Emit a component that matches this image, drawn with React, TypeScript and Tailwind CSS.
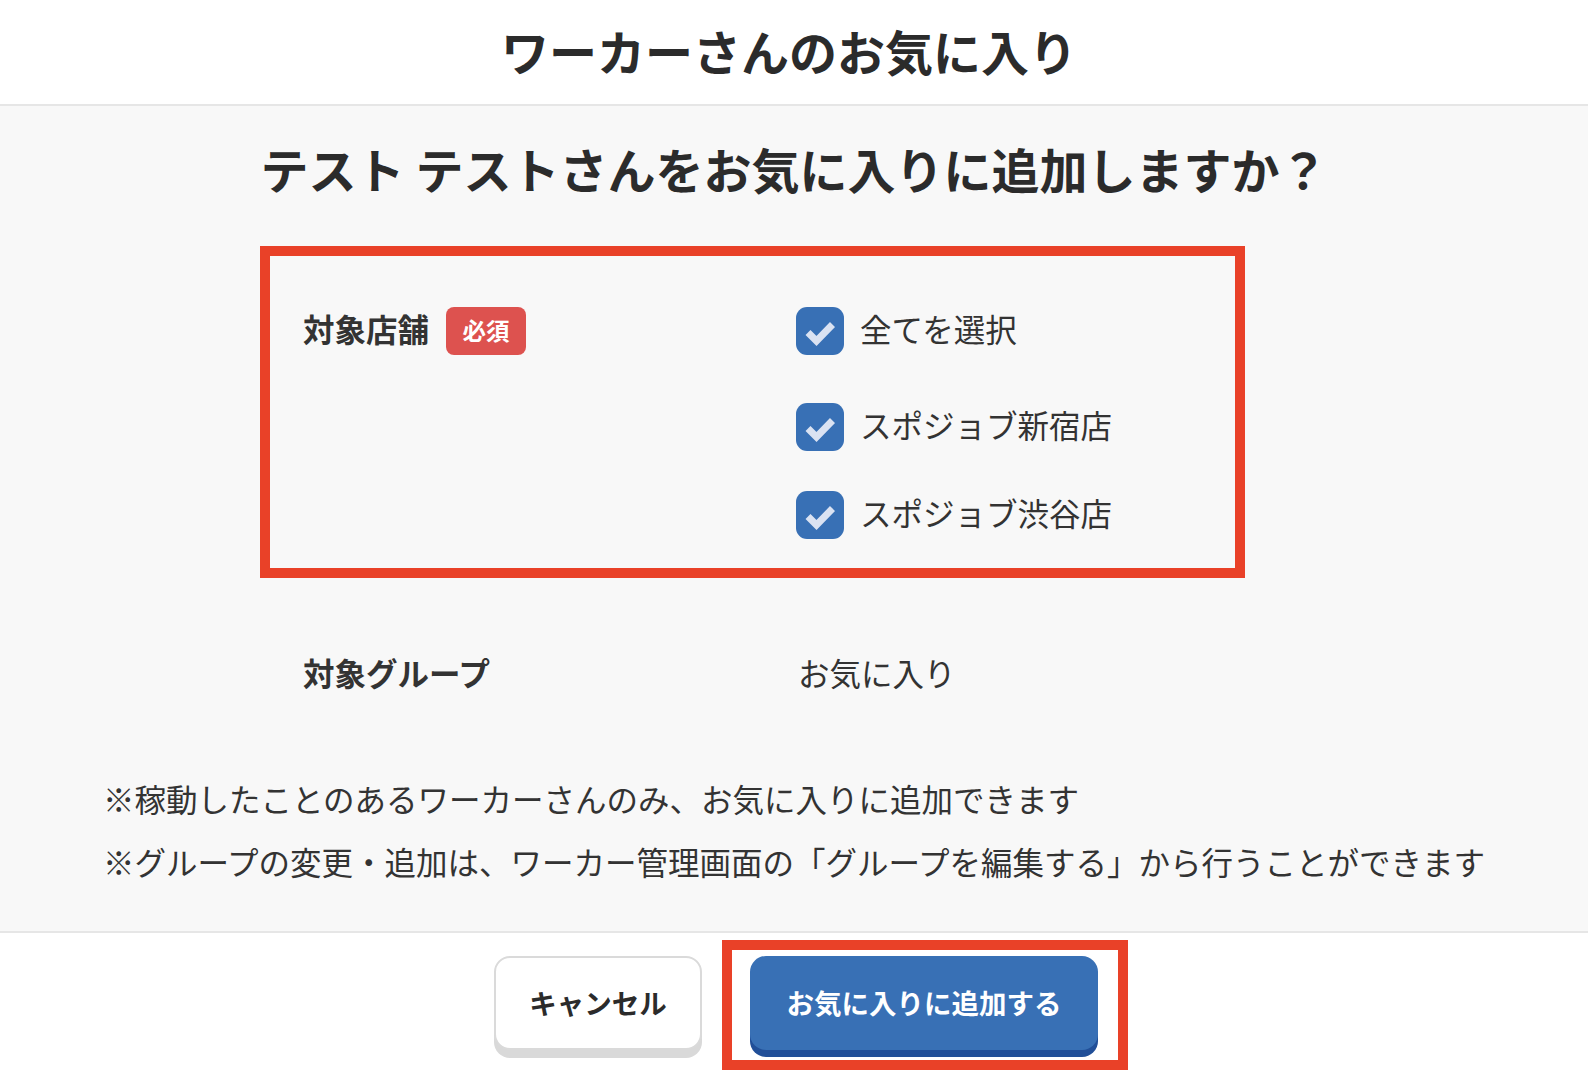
import { type ReactNode } from "react";

const stores = ["スポジョブ新宿店", "スポジョブ渋谷店"];

function CheckBox() {
  return (
    <span className="flex items-center justify-center w-[48px] h-[48px] rounded-[11px] bg-[#3870b5] shrink-0">
      <svg width="48" height="48" viewBox="0 0 48 48" fill="none">
        <path
          d="M12 25.5 L20.5 34 L36.5 17.5"
          stroke="#dae2f2"
          strokeWidth="7"
          strokeLinejoin="miter"
        />
      </svg>
    </span>
  );
}

function CheckRow({ label, className }: { label: string; className?: string }) {
  return (
    <label className={`flex items-center gap-[16px] h-[48px] ${className ?? ""}`}>
      <CheckBox />
      <span className="text-[31.5px] leading-none text-[#333] -translate-y-[2px]">{label}</span>
    </label>
  );
}

function FormRow({ label, children }: { label: ReactNode; children: ReactNode }) {
  return (
    <div className="grid grid-cols-[493px_1fr]">
      <div className="flex items-start">{label}</div>
      <div>{children}</div>
    </div>
  );
}

export default function App() {
  return (
    <div className="w-[1588px] h-[1072px] flex flex-col bg-white text-[#333] font-['Noto_Sans_CJK_JP','Noto_Sans',sans-serif]">
      <header className="h-[106px] shrink-0 flex items-center justify-center border-b-2 border-[#e6e6e6] pb-[5px]">
        <h1 className="text-[48px] leading-none font-bold text-[#2b2b2b] -translate-x-[5px]">
          ワーカーさんのお気に入り
        </h1>
      </header>

      <main className="h-[827px] shrink-0 bg-[#f8f8f8] border-b-2 border-[#e6e6e6] pt-[38px]">
        <h2 className="text-[48px] leading-[48px] font-bold text-[#2b2b2b] text-center">
          テスト テストさんをお気に入りに追加しますか？
        </h2>

        <div className="w-[982px] mx-auto mt-[115px]">
          <div className="relative">
            <span className="absolute -top-[61px] -left-[43px] right-[40px] -bottom-[39px] border-[10px] border-[#e94128] pointer-events-none" />
            <FormRow
              label={
                <div className="flex items-center gap-[17px] h-[48px]">
                  <span className="text-[31.5px] leading-none font-bold -translate-y-[2px]">対象店舗</span>
                  <span className="flex items-center justify-center w-[80px] h-[48px] rounded-[8px] bg-[#dd524f] text-white text-[23.5px] font-bold leading-none">
                    必須
                  </span>
                </div>
              }
            >
              <CheckRow label="全てを選択" />
              <CheckRow label={stores[0]} className="mt-[48px]" />
              <CheckRow label={stores[1]} className="mt-[40px]" />
            </FormRow>
          </div>

          <div className="mt-[110px]">
            <FormRow
              label={
                <div className="flex items-center h-[48px]">
                  <span className="text-[31.5px] leading-none font-bold">対象グループ</span>
                </div>
              }
            >
              <div className="flex items-center h-[48px] pl-[2px]">
                <span className="text-[31.5px] leading-none">お気に入り</span>
              </div>
            </FormRow>
          </div>
        </div>

        <div className="w-fit mx-auto mt-[70px] text-[31.5px] leading-[63px] text-[#333]">
          <p>※稼動したことのあるワーカーさんのみ、お気に入りに追加できます</p>
          <p>※グループの変更・追加は、ワーカー管理画面の「グループを編集する」から行うことができます</p>
        </div>
      </main>

      <footer className="flex-1 flex justify-center items-start gap-[48px] pt-[23px] pl-[4px]">
        <button className="w-[208px] h-[94px] rounded-[16px] bg-white border-2 border-[#dadada] shadow-[0_8px_0_#d9d9d9] text-[27.5px] font-bold leading-none text-[#2b2b2b]">
          キャンセル
        </button>
        <div className="relative">
          <span className="absolute -top-[16px] -left-[28px] -right-[30px] -bottom-[20px] border-[10px] border-[#e94128] pointer-events-none" />
          <button className="w-[348px] h-[94px] rounded-[16px] bg-[#3870b5] shadow-[0_7px_0_#214f98] text-[27.5px] font-bold leading-none text-white">
            お気に入りに追加する
          </button>
        </div>
      </footer>
    </div>
  );
}
